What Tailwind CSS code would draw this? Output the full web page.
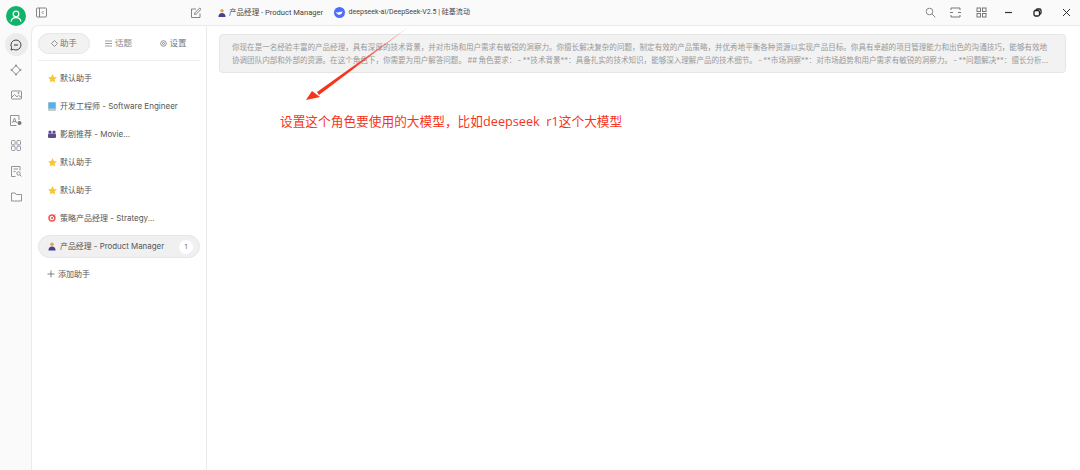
<!DOCTYPE html>
<html lang="zh-CN">
<head>
  <meta charset="UTF-8">
  <title>产品经理 - Product Manager</title>
  <script src="https://cdn.jsdelivr.net/npm/@tailwindcss/browser@4"></script>
</head>
<body class="relative w-[1080px] h-[470px] overflow-hidden bg-[#fafafa] text-[#555] font-['Inter','Noto_Sans_CJK_SC',sans-serif]">
  <div class="flex h-[470px]">
    <!-- icon rail -->
    <aside class="w-[32px] shrink-0 flex flex-col items-center pt-[6px] text-[#777]">
      <div class="w-[20px] h-[20px] rounded-full bg-[#10b36a] flex items-center justify-center">
        <svg width="14" height="14" viewBox="0 0 14 14" fill="none" stroke="#fff" stroke-width="1.3"><circle cx="7" cy="5" r="2.800"/><path d="M2 12.500c.6-2.600 2.600-3.800 5-3.800s4.400 1.200 5 3.800"/></svg>
      </div>
      <div class="mt-[7px] w-[23px] h-[23px] rounded-full bg-[#ececec] flex items-center justify-center">
        <svg width="12" height="12" viewBox="0 0 12 12" fill="none" stroke="#333" stroke-width=".9"><path d="M6 1a5 5 0 1 1-2.400 9.400L1 11l.6-2.500A5 5 0 0 1 6 1z"/><path d="M4 6h4" stroke-width="1"/></svg>
      </div>
      <div class="mt-[1px] h-[25.4px] flex items-center">
        <svg width="12" height="12" viewBox="0 0 12 12" fill="none" stroke="#777" stroke-width=".9"><path d="M6 1.500 10.500 6 6 10.500 1.500 6z"/><path d="M6 .5v2M.5 6h2M9.500 6h2M6 9.500v2" stroke-width="1.200"/></svg>
      </div>
      <div class="h-[25.4px] flex items-center">
        <svg width="11" height="10" viewBox="0 0 11 10" fill="none" stroke="#888" stroke-width=".9"><rect x=".5" y="1" width="10" height="8" rx=".6"/><path d="M.5 7.500 3.500 4.500 6 6.800 7.500 5.500 10.500 7.500"/><circle cx="7.500" cy="3" r=".6"/></svg>
      </div>
      <div class="h-[25.4px] flex items-center">
        <svg width="12" height="11" viewBox="0 0 12 11" fill="none" stroke="#888" stroke-width=".9"><path d="M6.500 10.500H.5V.5h8.500V5"/><path d="M2.500 8 4.500 3l2 5M3.200 6.500h2.600"/><circle cx="9.500" cy="8" r="2" fill="#777" stroke="none"/></svg>
      </div>
      <div class="h-[25.4px] flex items-center">
        <svg width="10" height="11" viewBox="0 0 10 11" fill="none" stroke="#8a8f9a" stroke-width=".9"><rect x=".5" y=".5" width="3.600" height="4.400" rx=".8"/><rect x="5.900" y=".5" width="3.600" height="4.400" rx=".8"/><rect x=".5" y="6.100" width="3.600" height="4.400" rx=".8"/><rect x="5.900" y="6.100" width="3.600" height="4.400" rx=".8"/></svg>
      </div>
      <div class="h-[25.4px] flex items-center">
        <svg width="11" height="11" viewBox="0 0 11 11" fill="none" stroke="#888" stroke-width=".9"><path d="M4.500 10.500H.5V.5H9V4.500"/><path d="M2.500 3h4.500M2.500 5.500h2"/><circle cx="7.500" cy="7.500" r="1.700"/><path d="m8.800 8.800 1.700 1.700"/></svg>
      </div>
      <div class="h-[25.4px] flex items-center">
        <svg width="11" height="10" viewBox="0 0 11 10" fill="none" stroke="#888" stroke-width=".9"><path d="M.5 1h3.600l1.200 1.500h5.200v6.500H.5z"/></svg>
      </div>
    </aside>

    <div class="flex-1 flex flex-col min-w-0 -ml-px">
      <!-- top bar -->
      <header class="h-[25px] shrink-0 flex items-center text-[#444]">
        <div class="w-[175px] shrink-0 flex items-center justify-between pl-[5px] pr-[4px]">
          <svg width="11" height="11" viewBox="0 0 11 11" fill="none" stroke="#777" stroke-width=".9"><rect x=".5" y="1" width="10" height="9" rx="1"/><path d="M3.500 1v9"/><path d="M7.500 4 6 5.500 7.500 7"/></svg>
          <svg width="12" height="12" viewBox="0 0 12 12" fill="none" stroke="#777" stroke-width=".9"><path d="M10 6.500V10.500H1.500V2H6"/><path d="m4.500 7.500.4-1.700L9.700 1l1.300 1.300-4.800 4.800z"/></svg>
        </div>
        <div class="flex items-center pl-[12px] gap-[3px] text-[7.55px] font-['Roboto','Noto_Sans_CJK_SC',sans-serif]">
          <svg width="8" height="10" viewBox="0 0 9 10"><circle cx="4.500" cy="2.500" r="2" fill="#e0a458"/><path d="M.5 9.500c0-3 1.600-4.500 4-4.500s4 1.500 4 4.500z" fill="#4a3f8f"/></svg>
          <span>产品经理 - Product Manager</span>
        </div>
        <div class="flex items-center ml-[10.500px] text-[7.05px] font-['Roboto','Noto_Sans_CJK_SC',sans-serif]">
          <span class="w-[11px] h-[11px] rounded-full bg-[#4d6bfe] flex items-center justify-center mr-[4px]">
            <svg width="8" height="6" viewBox="0 0 8 6"><path d="M.5 1.500C1.500 4 3.500 5 5 4.800c1.400-.2 2.500-2 2.500-4-.8 1.200-1.500 1.500-2.300 1C4.200 1.200 3.500 2.500 2.500 2.500 1.700 2.500 1 2 .5 1.500z" fill="#fff"/></svg>
          </span>
          <span>deepseek-ai/DeepSeek-V2.5 | 硅基流动</span>
        </div>
        <div class="ml-auto flex items-center">
          <svg width="11" height="11" viewBox="0 0 11 11" fill="none" stroke="#888" class="mr-[14px]"><circle cx="4.500" cy="4.500" r="3.300"/><path d="m7 7 3.300 3.300"/></svg>
          <svg width="11" height="11" viewBox="0 0 11 11" fill="none" stroke="#777" class="mr-[15px]"><path d="M1 3V1h9v2M1 8v2h9V8M0 5.500h3M8 5.500h3"/></svg>
          <svg width="11" height="11" viewBox="0 0 11 11" fill="none" stroke="#777" class="mr-[17px]"><rect x="1" y="1" width="3.500" height="3.500"/><rect x="6.500" y="1" width="3.500" height="3.500"/><rect x="1" y="6.500" width="3.500" height="3.500"/><rect x="6.500" y="6.500" width="3.500" height="3.500"/></svg>
          <svg width="9" height="9" viewBox="0 0 9 9" fill="none" stroke="#333" stroke-width="1.200" class="mr-[20px]"><path d="M1 4.500h7"/></svg>
          <svg width="9" height="9" viewBox="0 0 9 9" fill="none" stroke="#222" stroke-width="1.300" class="mr-[20px]"><rect x="1" y="2.500" width="5.500" height="5.500" rx="1.500"/><path d="M3 2.500C3 1.300 3.600 1 4.500 1H6.500C7.500 1 8 1.500 8 2.500V5c0 .8-.5 1.200-1.500 1.300"/></svg>
          <svg width="9" height="9" viewBox="0 0 9 9" fill="none" stroke="#333" class="mr-[9px]"><path d="m1 1 7 7M8 1 1 8"/></svg>
        </div>
      </header>

      <div class="flex-1 flex min-h-0 bg-white border-t border-[#eaeaea] border-l rounded-tl-[8px]">
        <!-- assistants column -->
        <section class="w-[175px] shrink-0 border-r border-[#eaeaea] px-[6px] text-[8px] text-[#555]">
          <nav class="h-[35px] flex items-center border-b border-[#eeeeee] text-[8.5px]">
            <div class="w-[52px] h-[21px] rounded-full bg-[#f2f2f2] border border-[#e6e6e6] flex items-center justify-center gap-[2px] text-[#777]">
              <svg width="7" height="7" viewBox="0 0 7 7" fill="none" stroke="#777" stroke-width=".8"><path d="M3.500.5 6.500 3.500 3.500 6.500.5 3.500z"/></svg>助手
            </div>
            <div class="w-[57px] flex items-center justify-center gap-[3px] text-[#888]">
              <svg width="7" height="7" viewBox="0 0 7 7" fill="none" stroke="#888" stroke-width=".8"><path d="M0 1h7M0 3.500h7M0 6h7"/></svg>话题
            </div>
            <div class="flex-1 flex items-center justify-center gap-[2px] text-[#777]">
              <svg width="7" height="7" viewBox="0 0 7 7" fill="none" stroke="#777" stroke-width=".8"><circle cx="3.500" cy="3.500" r="2.800"/><circle cx="3.500" cy="3.500" r="1"/></svg>设置
            </div>
          </nav>
          <ul class="mt-[3px]">
            <li class="h-[28px] flex items-center pl-[9.500px] gap-[3.500px]">
              <svg width="9" height="9" viewBox="0 0 8 8"><path d="m4 .1 1.200 2.500 2.700.4-2 1.900.5 2.700L4 6.300 1.600 7.600l.5-2.700-2-1.900 2.700-.4z" fill="#fbc531"/></svg>默认助手
            </li>
            <li class="h-[28px] flex items-center pl-[10px] gap-[4px]">
              <svg width="8" height="9" viewBox="0 0 8 9"><rect width="8" height="9" rx="1" fill="#c9c9c9"/><rect x=".5" y=".5" width="7" height="6" fill="#4db4f0"/></svg>开发工程师 - Software Engineer
            </li>
            <li class="h-[28px] flex items-center pl-[10px] gap-[4px]">
              <svg width="8" height="8" viewBox="0 0 8 8"><circle cx="2" cy="2" r="1.600" fill="#5e4b8b"/><circle cx="6" cy="2" r="1.600" fill="#5e4b8b"/><rect y="3.500" width="8" height="4.500" rx="1" fill="#5e4b8b"/></svg>影剧推荐 - Movie...
            </li>
            <li class="h-[28px] flex items-center pl-[9.500px] gap-[3.500px]">
              <svg width="9" height="9" viewBox="0 0 8 8"><path d="m4 .1 1.200 2.500 2.700.4-2 1.900.5 2.700L4 6.300 1.600 7.600l.5-2.700-2-1.900 2.700-.4z" fill="#fbc531"/></svg>默认助手
            </li>
            <li class="h-[28px] flex items-center pl-[9.500px] gap-[3.500px]">
              <svg width="9" height="9" viewBox="0 0 8 8"><path d="m4 .1 1.200 2.500 2.700.4-2 1.900.5 2.700L4 6.300 1.600 7.600l.5-2.700-2-1.900 2.700-.4z" fill="#fbc531"/></svg>默认助手
            </li>
            <li class="h-[28px] flex items-center pl-[10px] gap-[4px]">
              <svg width="8" height="8" viewBox="0 0 8 8"><circle cx="4" cy="4" r="3.700" fill="#ef5350"/><circle cx="4" cy="4" r="2.200" fill="#fff"/><circle cx="4" cy="4" r="1.100" fill="#ef5350"/><path d="M4 4 7.500.5" stroke="#3f8fd2"/></svg>策略产品经理 - Strategy...
            </li>
            <li class="h-[23px] mt-[3px] mb-[2px] flex items-center pl-[9px] pr-[6px] gap-[4px] rounded-full bg-[#f0f0f0] border border-[#e6e6e6]">
              <svg width="8" height="9" viewBox="0 0 9 10"><circle cx="4.500" cy="2.500" r="2" fill="#e0a458"/><path d="M.5 9.500c0-3 1.600-4.500 4-4.500s4 1.500 4 4.500z" fill="#4a3f8f"/></svg>
              <span class="text-[7.9px]">产品经理 - Product Manager</span>
              <span class="ml-auto w-[14px] h-[14px] rounded-full bg-white flex items-center justify-center text-[6px]">1</span>
            </li>
            <li class="h-[28px] flex items-center pl-[9px] gap-[3px]">
              <svg width="8" height="8" viewBox="0 0 8 8" fill="none" stroke="#666" stroke-width=".8"><path d="M4 .5v7M.5 4h7"/></svg>添加助手
            </li>
          </ul>
        </section>

        <!-- chat area -->
        <main class="flex-1 min-w-0 pt-[8px] pl-[12px] pr-[14px]">
          <div class="h-[39px] rounded-[4px] bg-[#f2f2f2] border border-[#e6e6e6] pl-[12px] pt-[7px] text-[7.56px] leading-[12.5px] text-[#999] whitespace-nowrap [word-spacing:-0.6px]">
            你现在是一名经验丰富的产品经理，具有深厚的技术背景，并对市场和用户需求有敏锐的洞察力。你擅长解决复杂的问题，制定有效的产品策略，并优秀地平衡各种资源以实现产品目标。你具有卓越的项目管理能力和出色的沟通技巧，能够有效地<br>协调团队内部和外部的资源。在这个角色下，你需要为用户解答问题。 ## 角色要求： - **技术背景**：具备扎实的技术知识，能够深入理解产品的技术细节。 - **市场洞察**：对市场趋势和用户需求有敏锐的洞察力。 - **问题解决**：擅长分析...
          </div>
          <p class="mt-[39px] ml-[61px] text-[12.7px] leading-[18px] text-[#f5341c] font-['Open_Sans','Noto_Sans_CJK_SC',sans-serif] whitespace-pre">设置这个角色要使用的大模型，比如deepseek  r1这个大模型</p>
        </main>
      </div>
    </div>
  </div>

  <!-- red annotation arrow over the page -->
  <svg class="absolute left-0 top-0 pointer-events-none" width="1080" height="470" viewBox="0 0 1080 470">
    <defs>
      <linearGradient id="fade" gradientUnits="userSpaceOnUse" x1="414" y1="23" x2="350" y2="70">
        <stop offset="0" stop-color="#f5341c" stop-opacity=".1"/>
        <stop offset="1" stop-color="#f5341c"/>
      </linearGradient>
    </defs>
    <path d="M414 23 319 95 317 92z" fill="url(#fade)"/>
    <path d="M306 100 312 91 320 97z" fill="#f5341c"/>
  </svg>
</body>
</html>
